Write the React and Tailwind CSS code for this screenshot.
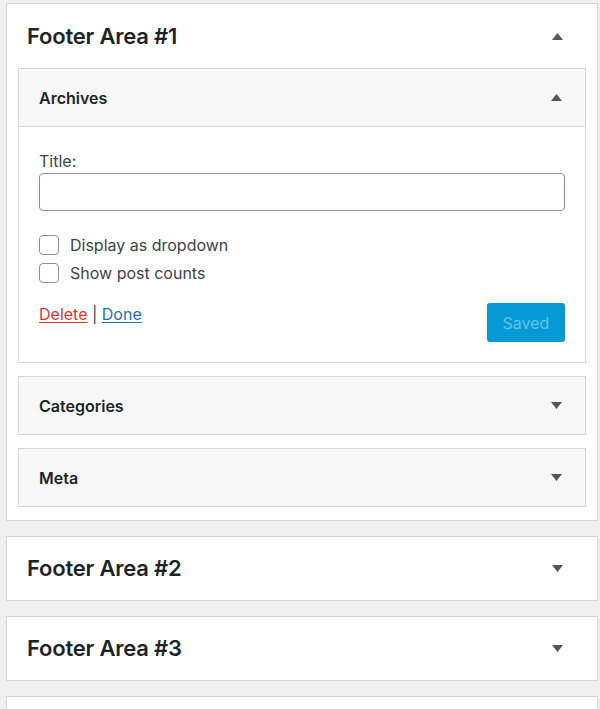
import React from "react";

const Caret = ({ up }) => (
  <svg width="11" height="7" viewBox="0 0 11 7" className="text-[#50575e]">
    {up ? <path d="M5.5 0L11 7H0z" fill="currentColor" /> : <path d="M0 0h11L5.5 7z" fill="currentColor" />}
  </svg>
);

const WidgetHeader = ({ title, open }) => (
  <div className="flex items-center justify-between h-[57px] pl-[20px] pr-[23px] bg-[#f8f8f8]">
    <span className="text-[16px] font-semibold text-[#1d2327]">{title}</span>
    <Caret up={open} />
  </div>
);

const AreaPanel = ({ title, open, children }) => (
  <div className="bg-white border border-[#d6d6d8]">
    <div className={`flex items-center justify-between pl-[20px] pr-[34px] ${children ? "h-[64px]" : "h-[63px]"}`}>
      <h2 className="text-[22px] font-semibold text-[#1d2327] tracking-[-0.2px]">{title}</h2>
      <Caret up={open} />
    </div>
    {children}
  </div>
);

export default function App() {
  return (
    <div
      className="h-[709px] overflow-hidden bg-[#f0f0f1] px-[6px] pt-[3px] pr-[2px] flex flex-col gap-[15px]"
      style={{ fontFamily: "Inter, 'Noto Sans', sans-serif" }}
    >
      <AreaPanel title="Footer Area #1" open>
        <div className="px-[11px] pb-[13px] flex flex-col gap-[13px]">
          {/* Archives (open) */}
          <div className="border border-[#d6d6d8]">
            <WidgetHeader title="Archives" open />
            <div className="border-t border-[#d6d6d8] bg-white px-[20px] pt-[24px] pb-[20px]">
              <label className="block text-[16px] leading-[20px] text-[#3c434a] mb-[2px]">Title:</label>
              <input
                type="text"
                className="block w-full h-[38px] rounded-[4px] border border-[#8c8f94] bg-white"
              />
              <div className="mt-[20px] flex flex-col">
                {["Display as dropdown", "Show post counts"].map((label) => (
                  <label key={label} className="flex items-center h-[28px] gap-[11px]">
                    <span className="w-[20px] h-[20px] rounded-[4px] border border-[#8c8f94] bg-white" />
                    <span className="text-[16px] text-[#3c434a]">{label}</span>
                  </label>
                ))}
              </div>
              <div className="mt-[16px] flex items-start justify-between">
                <div className="mt-[1px] text-[16px] leading-[20px] text-[#3c434a]">
                  <a className="text-[#d63638] underline underline-offset-2">Delete</a>
                  <span> | </span>
                  <a className="text-[#2271b1] underline underline-offset-2">Done</a>
                </div>
                <button className="w-[78px] h-[39px] rounded-[3px] bg-[#0798d6] text-[16px] text-[#5fc6ec]">
                  Saved
                </button>
              </div>
            </div>
          </div>

          {/* Categories */}
          <div className="border border-[#d6d6d8]">
            <WidgetHeader title="Categories" />
          </div>

          {/* Meta */}
          <div className="border border-[#d6d6d8]">
            <WidgetHeader title="Meta" />
          </div>
        </div>
      </AreaPanel>

      <AreaPanel title="Footer Area #2" />
      <AreaPanel title="Footer Area #3" />
      <div className="bg-white border border-[#d6d6d8] h-[64px] shrink-0" />
    </div>
  );
}
